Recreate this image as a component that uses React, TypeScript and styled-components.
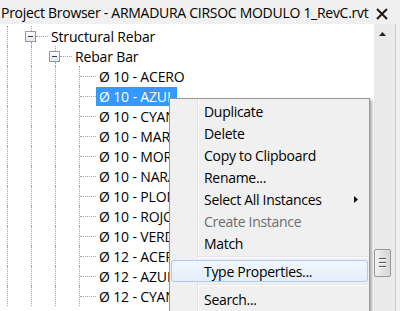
import React from "react";
import styled, { createGlobalStyle } from "styled-components";

const GlobalStyle = createGlobalStyle`
  html, body {
    margin: 0;
    padding: 0;
    background: #f0f0f0;
  }
  body {
    font-family: "Open Sans", "Noto Sans", sans-serif;
  }
`;

type Row = {
  label: string;
  depth: number;
  group?: boolean;
  selected?: boolean;
};

const rows: Row[] = [
  { label: "Structural Rebar", depth: 1, group: true },
  { label: "Rebar Bar", depth: 2, group: true },
  { label: "Ø 10 - ACERO", depth: 3 },
  { label: "Ø 10 - AZUL", depth: 3, selected: true },
  { label: "Ø 10 - CYAN", depth: 3 },
  { label: "Ø 10 - MARRON", depth: 3 },
  { label: "Ø 10 - MORADO", depth: 3 },
  { label: "Ø 10 - NARANJA", depth: 3 },
  { label: "Ø 10 - PLOMO", depth: 3 },
  { label: "Ø 10 - ROJO", depth: 3 },
  { label: "Ø 10 - VERDE", depth: 3 },
  { label: "Ø 12 - ACERO", depth: 3 },
  { label: "Ø 12 - AZUL", depth: 3 },
  { label: "Ø 12 - CYAN", depth: 3 },
];

type MenuEntry =
  | { kind: "item"; label: string; disabled?: boolean; hover?: boolean; sub?: boolean }
  | { kind: "sep" };

const menu: MenuEntry[] = [
  { kind: "item", label: "Duplicate" },
  { kind: "item", label: "Delete" },
  { kind: "item", label: "Copy to Clipboard" },
  { kind: "item", label: "Rename..." },
  { kind: "item", label: "Select All Instances", sub: true },
  { kind: "item", label: "Create Instance", disabled: true },
  { kind: "item", label: "Match" },
  { kind: "sep" },
  { kind: "item", label: "Type Properties...", hover: true },
  { kind: "sep" },
  { kind: "item", label: "Search..." },
];

export default function App() {
  return (
    <>
      <GlobalStyle />
      <Window>
        <TitleBar>
          <Title>Project Browser - ARMADURA CIRSOC MODULO 1_RevC.rvt</Title>
          <CloseButton>
            <svg width="12" height="12" viewBox="0 0 12 12">
              <path d="M1 1 L11 11 M11 1 L1 11" stroke="#1a1a1a" strokeWidth="2" />
            </svg>
          </CloseButton>
        </TitleBar>
        <Body>
          <TreePane>
            {rows.map((r, i) => (
              <TreeRow key={i}>
                {Array.from({ length: r.depth }).map((_, g) => (
                  <Guide key={g} />
                ))}
                {r.group ? (
                  <NodeCell>
                    <BoxColumn>
                      <VLine />
                      <ExpandBox>
                        <Minus />
                      </ExpandBox>
                      <VLine />
                    </BoxColumn>
                    <HLine />
                  </NodeCell>
                ) : (
                  <NodeCell>
                    <LeafStem>
                      <HLine />
                    </LeafStem>
                  </NodeCell>
                )}
                <Label $selected={r.selected}>{r.label}</Label>
              </TreeRow>
            ))}
          </TreePane>
          <ScrollBar>
            <ScrollColumn>
              <ArrowUp>
                <svg width="7" height="4" viewBox="0 0 7 4">
                  <path d="M0 4 L3.5 0 L7 4 Z" fill="#222" />
                </svg>
              </ArrowUp>
              <Thumb>
                <Grip />
                <Grip />
                <Grip />
              </Thumb>
            </ScrollColumn>
          </ScrollBar>
          <Edge />
        </Body>
        <ContextMenu>
          {menu.map((m, i) =>
            m.kind === "sep" ? (
              <Separator key={i} />
            ) : (
              <MenuItem key={i} $disabled={m.disabled} $hover={m.hover}>
                <span>{m.label}</span>
                {m.sub && (
                  <svg width="4" height="7" viewBox="0 0 4 7">
                    <path d="M0 0 L4 3.5 L0 7 Z" fill="#111" />
                  </svg>
                )}
              </MenuItem>
            )
          )}
        </ContextMenu>
      </Window>
    </>
  );
}

const Window = styled.div`
  position: relative;
  width: 400px;
  height: 311px;
  overflow: hidden;
  display: flex;
  flex-direction: column;
  background: #f0f0f0;
  color: #000;
  font-size: 14px;
`;

const TitleBar = styled.div`
  height: 24px;
  display: flex;
  align-items: center;
  justify-content: space-between;
  padding-right: 12px;
  flex-shrink: 0;
`;

const Title = styled.span`
  padding-left: 1px;
  white-space: nowrap;
  letter-spacing: -0.28px;
`;

const CloseButton = styled.span`
  display: flex;
  align-items: center;
  margin-top: 3px;
`;

const Body = styled.div`
  flex: 1;
  display: flex;
  min-height: 0;
`;

const TreePane = styled.div`
  width: 374px;
  background: #fff;
  padding-top: 2px;
  overflow: hidden;
`;

const TreeRow = styled.div`
  height: 20px;
  display: flex;
  align-items: stretch;
`;

const Guide = styled.div`
  width: 24px;
  flex-shrink: 0;
  box-sizing: border-box;
  padding-left: 7px;
  &::before {
    content: "";
    display: block;
    height: 100%;
    border-left: 1px dotted #a3a3a3;
  }
`;

const NodeCell = styled.div`
  width: 24px;
  flex-shrink: 0;
  display: flex;
  align-items: center;
`;

const BoxColumn = styled.div`
  width: 11px;
  height: 100%;
  margin-left: 1px;
  display: flex;
  flex-direction: column;
`;

const VLine = styled.div`
  flex: 1;
  margin-left: 6px;
  border-left: 1px dotted #a3a3a3;
`;

const ExpandBox = styled.div`
  width: 11px;
  height: 11px;
  box-sizing: border-box;
  border: 1px solid #8e9aa6;
  background: linear-gradient(to bottom, #ffffff, #e6e6e6);
  display: flex;
  align-items: center;
  justify-content: center;
`;

const Minus = styled.div`
  width: 5px;
  height: 1px;
  background: #1c3a78;
`;

const HLine = styled.div`
  flex: 1;
  height: 0;
  border-top: 1px dotted #a3a3a3;
`;

const LeafStem = styled.div`
  margin-left: 7px;
  height: 100%;
  flex: 1;
  display: flex;
  align-items: center;
  border-left: 1px dotted #a3a3a3;
`;

const Label = styled.span<{ $selected?: boolean }>`
  display: flex;
  align-items: center;
  padding: 0 3px;
  height: 19px;
  align-self: center;
  white-space: nowrap;
  letter-spacing: -0.15px;
  background: ${(p) => (p.$selected ? "#3399ff" : "transparent")};
  color: ${(p) => (p.$selected ? "#fff" : "#000")};
`;

const ScrollBar = styled.div`
  width: 21px;
  background: #eaeaea;
  display: flex;
`;

const ScrollColumn = styled.div`
  width: 17px;
  display: flex;
  flex-direction: column;
  align-items: center;
`;

const ArrowUp = styled.div`
  height: 19px;
  display: flex;
  align-items: center;
  justify-content: center;
`;

const Thumb = styled.div`
  margin-top: 206px;
  width: 17px;
  height: 28px;
  box-sizing: border-box;
  border: 1px solid #989898;
  border-radius: 2px;
  background: linear-gradient(to right, #f3f3f3, #e2e2e2 50%, #d6d6d6);
  display: flex;
  flex-direction: column;
  align-items: center;
  justify-content: center;
  gap: 2px;
`;

const Grip = styled.div`
  width: 7px;
  height: 1px;
  background: #555;
  border-bottom: 1px solid #fafafa;
`;

const Edge = styled.div`
  width: 5px;
  border-left: 1px solid #c9c9c9;
  box-sizing: border-box;
  background: #f0f0f0;
`;

const ContextMenu = styled.div`
  position: absolute;
  left: 169px;
  top: 98px;
  width: 201px;
  height: 240px;
  box-sizing: border-box;
  border: 1px solid #979797;
  padding: 1px;
  background: linear-gradient(
    to right,
    #f0f0f0 27px,
    #e2e3e3 27px,
    #e2e3e3 28px,
    #ffffff 28px,
    #ffffff 29px,
    #f0f0f0 29px
  );
  box-shadow: 2px 2px 3px rgba(0, 0, 0, 0.35);
  display: flex;
  flex-direction: column;
`;

const MenuItem = styled.div<{ $disabled?: boolean; $hover?: boolean }>`
  height: 22px;
  box-sizing: border-box;
  display: flex;
  align-items: center;
  justify-content: space-between;
  padding: 0 9px 0 32px;
  white-space: nowrap;
  letter-spacing: -0.3px;
  color: ${(p) => (p.$disabled ? "#6d6d6d" : "#000")};
  border: 1px solid ${(p) => (p.$hover ? "#a9cdf0" : "transparent")};
  border-radius: 3px;
  background: ${(p) =>
    p.$hover ? "linear-gradient(to bottom, #f1f7fd, #e3eef9)" : "transparent"};
`;

const Separator = styled.div`
  height: 6px;
  margin-left: 27px;
  display: flex;
  flex-direction: column;
  justify-content: center;
  &::before {
    content: "";
    height: 1px;
    background: #e2e3e3;
  }
  &::after {
    content: "";
    height: 1px;
    background: #ffffff;
  }
`;
